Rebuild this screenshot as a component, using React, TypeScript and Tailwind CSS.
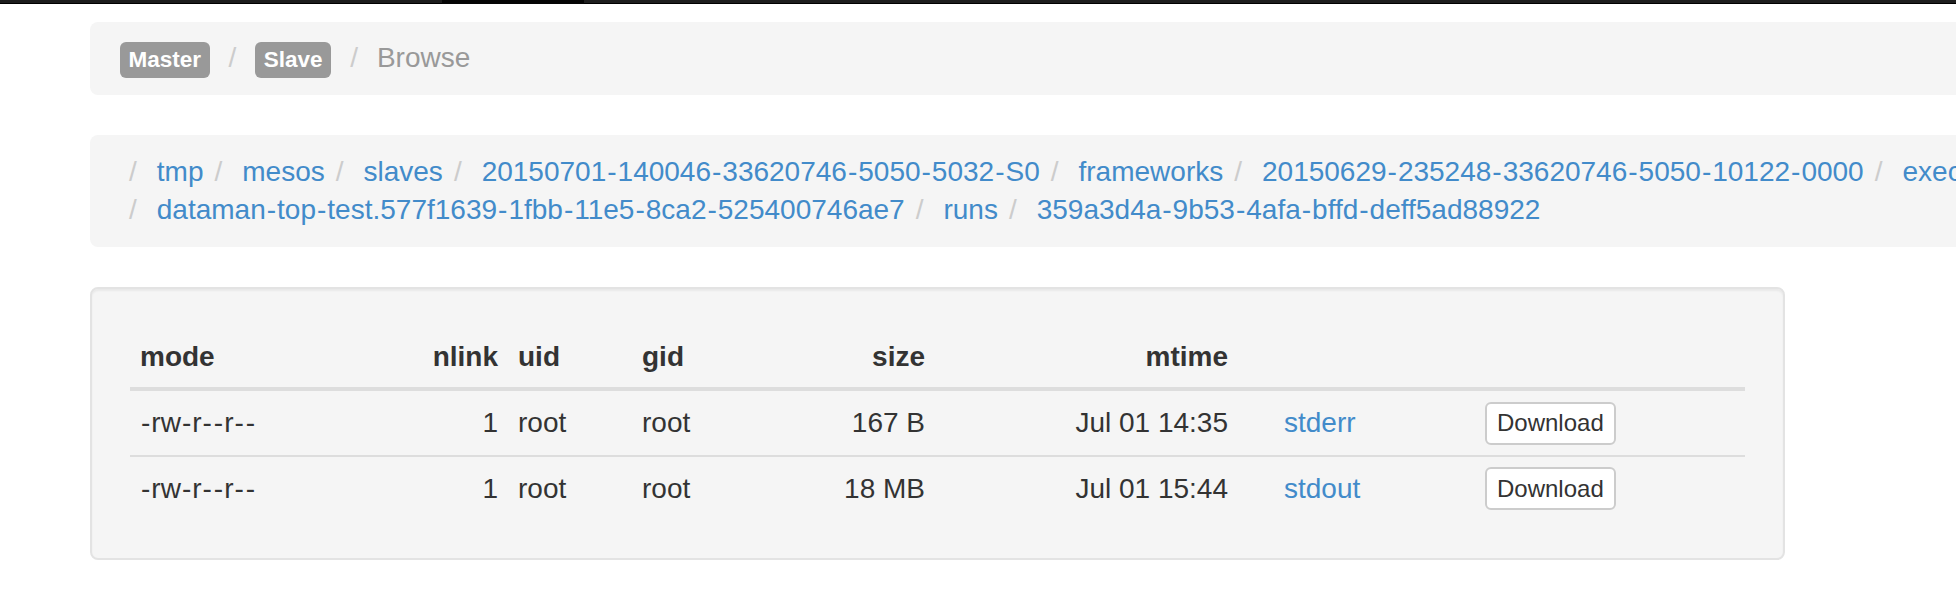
import React from 'react';

const path = [
  'tmp',
  'mesos',
  'slaves',
  '20150701-140046-33620746-5050-5032-S0',
  'frameworks',
  '20150629-235248-33620746-5050-10122-0000',
  'executors',
  'dataman-top-test.577f1639-1fbb-11e5-8ca2-525400746ae7',
  'runs',
  '359a3d4a-9b53-4afa-bffd-deff5ad88922',
];

const files = [
  { mode: '-rw-r--r--', nlink: 1, uid: 'root', gid: 'root', size: '167 B', mtime: 'Jul 01 14:35', name: 'stderr' },
  { mode: '-rw-r--r--', nlink: 1, uid: 'root', gid: 'root', size: '18 MB', mtime: 'Jul 01 15:44', name: 'stdout' },
];

const cols = 'grid grid-cols-[290px_88px_124px_128px_175px_303px_237px_268px]';

// the original font draws a wider hyphen than Liberation Sans
function Hyph({ text }: { text: string }) {
  const parts = text.split('-');
  return (
    <>
      {parts.map((p, i) => (
        <React.Fragment key={i}>
          {i > 0 && <span className="px-[1px]">-</span>}
          {p}
        </React.Fragment>
      ))}
    </>
  );
}

export default function App() {
  return (
    <div
      className="min-h-screen w-full overflow-hidden bg-white text-[#333]"
      style={{ fontFamily: '"Liberation Sans", Arial, sans-serif' }}
    >
      {/* navbar edge */}
      <div className="flex h-[4px]">
        <div className="w-[442px] border-b border-black bg-[#1c1c1c]" />
        <div className="w-[142px] bg-[#050505]" />
        <div className="flex-1 border-b border-black bg-[#1e1e1e]" />
      </div>

      <div className="pl-[90px] pt-[18px] pb-10">
        {/* top breadcrumb */}
        <div className="flex w-[2300px] items-baseline gap-[19px] rounded-[8px] bg-[#f5f5f5] px-[30px] py-[17px] text-[28px] leading-[38px]">
          <span className="inline-block h-[36px] rounded-[6px] bg-[#999] px-[8.5px] text-[22.5px] font-bold leading-[36px] text-white">
            Master
          </span>
          <span className="text-[#ccc]">/</span>
          <span className="inline-block h-[36px] rounded-[6px] bg-[#999] px-[8.5px] text-[22.5px] font-bold leading-[36px] text-white">
            Slave
          </span>
          <span className="text-[#ccc]">/</span>
          <span className="text-[#999]">Browse</span>
        </div>

        {/* path breadcrumb */}
        <div className="mt-[40px] flex w-[2300px] flex-wrap gap-x-[2px] rounded-[8px] bg-[#f5f5f5] px-[30px] py-[18px] text-[28px] leading-[38px]">
          {path.map((p) => (
            <span key={p} className="flex whitespace-nowrap">
              <span className="px-[9px] text-[#ccc]">/</span>
              <a className="ml-[11px] cursor-pointer text-[#428bca]">
                <Hyph text={p} />
              </a>
            </span>
          ))}
        </div>

        {/* files */}
        <div className="mt-[40px] w-[1695px] rounded-[8px] border-2 border-[#e3e3e3] bg-[#f5f5f5] p-[38px] shadow-[inset_0_2px_2px_rgba(0,0,0,0.05)]">
          <div className="text-[28px] leading-[38px]">
            <div className={`${cols} h-[64px] items-center border-b-4 border-[#ddd] font-bold`}>
              <div className="px-[10px]">mode</div>
              <div className="px-[10px] text-right">nlink</div>
              <div className="px-[10px]">uid</div>
              <div className="px-[10px]">gid</div>
              <div className="px-[10px] text-right">size</div>
              <div className="px-[10px] text-right">mtime</div>
              <div />
              <div />
            </div>
            {files.map((f, i) => (
              <div
                key={f.name}
                className={`${cols} items-center ${i > 0 ? 'h-[65px] border-t-2 border-[#ddd]' : 'h-[64px]'}`}
              >
                <div className="px-[10px]">
                  <Hyph text={f.mode} />
                </div>
                <div className="px-[10px] text-right">{f.nlink}</div>
                <div className="px-[10px]">{f.uid}</div>
                <div className="px-[10px]">{f.gid}</div>
                <div className="px-[10px] text-right">{f.size}</div>
                <div className="px-[10px] text-right">{f.mtime}</div>
                <div className="pl-[46px] pr-[10px]">
                  <a className="cursor-pointer text-[#428bca]">{f.name}</a>
                </div>
                <div className="px-[10px]">
                  <button className="h-[43px] rounded-[6px] border-2 border-[#ccc] bg-white px-[10px] text-[24px] leading-[30px] text-[#333]">
                    Download
                  </button>
                </div>
              </div>
            ))}
          </div>
        </div>
      </div>
    </div>
  );
}
